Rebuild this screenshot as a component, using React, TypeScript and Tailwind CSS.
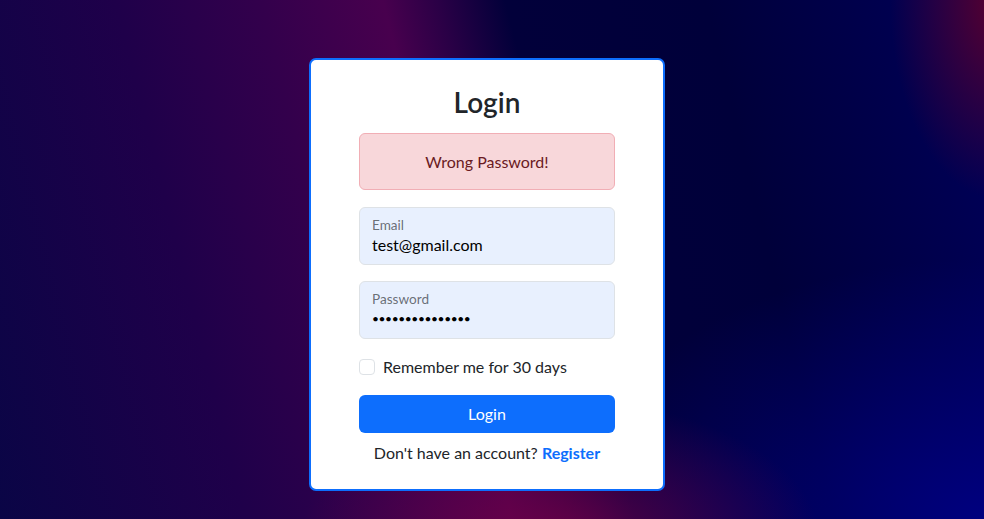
import { useState } from "react";

export default function App() {
  const [remember, setRemember] = useState(false);

  return (
    <div
      className="min-h-[519px] w-full flex justify-center pt-[58px] pr-[10px] text-[#212529] bg-[radial-gradient(ellipse_260px_140px_at_560px_540px,rgba(120,0,70,0.75),transparent),radial-gradient(ellipse_110px_200px_at_1000px_0px,rgba(100,0,40,0.9),transparent),radial-gradient(ellipse_420px_260px_at_984px_519px,rgba(0,0,140,0.8),transparent),linear-gradient(76deg,#0a0546_0%,#1f004a_22%,#33004c_35%,#48004e_46%,#2a0046_51%,#02003a_57%,#00003a_75%,#00005a_100%)]"
      style={{ fontFamily: "Lato, 'Noto Sans', sans-serif" }}
    >
      <div className="w-[356px] h-[433px] bg-white border-2 border-[#0d6efd] rounded-[7px] px-12 pt-[25px]">
        {/* Title */}
        <h3 className="text-[28px] leading-[34px] font-semibold text-center text-[#212529]">Login</h3>

        {/* Error */}
        <div className="mt-[14px] h-[57px] flex items-center justify-center rounded-[6px] border border-[#f1aeb5] bg-[#f8d7da] text-[#6a1a22] text-base">
          Wrong Password!
        </div>

        {/* Email */}
        <div className="mt-[17px] h-[58px] rounded-[6px] border border-[#dee2e6] bg-[#e8f0fe] px-3 pt-[9px]">
          <div className="text-[13.6px] leading-4 text-[#212529a6]">Email</div>
          <div className="mt-[2px] text-base leading-5 text-black">test@gmail.com</div>
        </div>

        {/* Password */}
        <div className="mt-4 h-[58px] rounded-[6px] border border-[#dee2e6] bg-[#e8f0fe] px-3 pt-[9px]">
          <div className="text-[13.6px] leading-4 text-[#212529a6]">Password</div>
          <div className="mt-[2px] text-[12px] leading-5 text-black tracking-[-0.4px]">•••••••••••••••</div>
        </div>

        {/* Remember */}
        <label className="mt-4 h-6 flex items-center gap-[8px] cursor-pointer">
          <input
            type="checkbox"
            checked={remember}
            onChange={(e) => setRemember(e.target.checked)}
            className="appearance-none w-4 h-4 rounded-[4px] border border-[#dee2e6] bg-white checked:bg-[#0d6efd] checked:border-[#0d6efd]"
          />
          <span className="text-base leading-6 text-[#212529]">Remember me for 30 days</span>
        </label>

        {/* Submit */}
        <button className="mt-4 w-full h-[38px] rounded-[6px] bg-[#0d6efd] text-white text-base">Login</button>

        <p className="mt-2 text-center text-base leading-6 text-[#212529]">
          Don't have an account?{" "}
          <a href="#" className="font-bold text-[#0d6efd] no-underline">
            Register
          </a>
        </p>
      </div>
    </div>
  );
}
